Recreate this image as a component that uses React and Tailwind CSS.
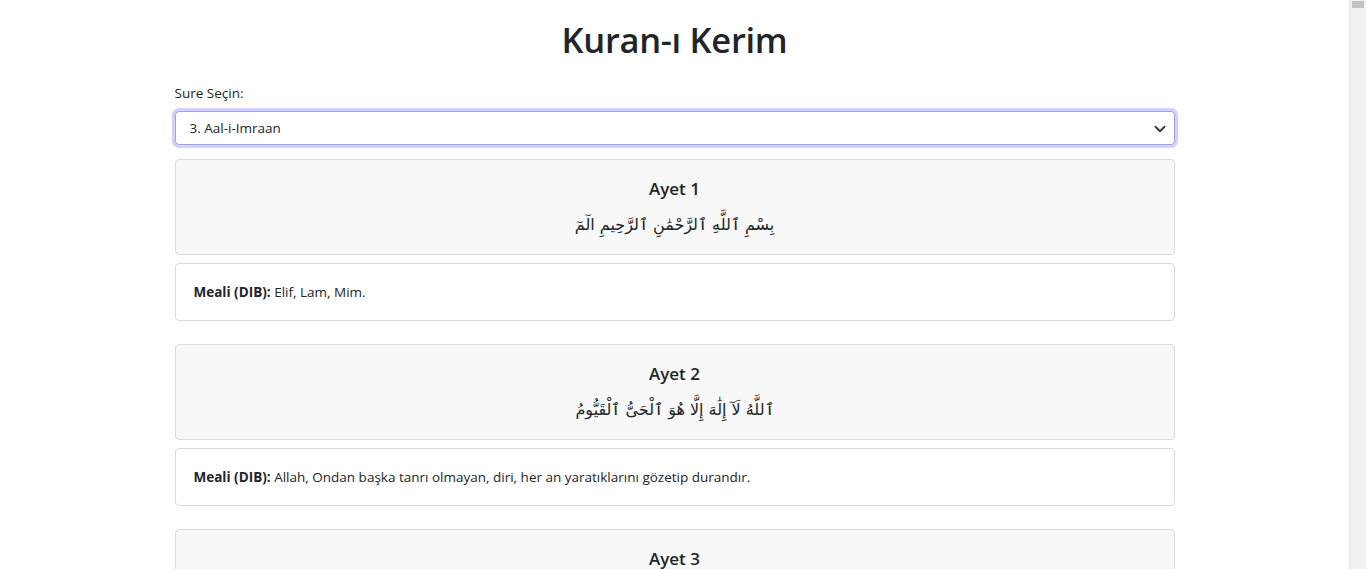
import React from "react";

const ayetler = [
  {
    no: 1,
    arabic: "بِسْمِ ٱللَّهِ ٱلرَّحْمَٰنِ ٱلرَّحِيمِ الٓمٓ",
    meal: "Elif, Lam, Mim.",
  },
  {
    no: 2,
    arabic: "ٱللَّهُ لَآ إِلَٰهَ إِلَّا هُوَ ٱلْحَىُّ ٱلْقَيُّومُ",
    meal: "Allah, Ondan başka tanrı olmayan, diri, her an yaratıklarını gözetip durandır.",
  },
  {
    no: 3,
    arabic: "نَزَّلَ عَلَيْكَ ٱلْكِتَٰبَ بِٱلْحَقِّ مُصَدِّقًا لِّمَا بَيْنَ يَدَيْهِ وَأَنزَلَ ٱلتَّوْرَىٰةَ وَٱلْإِنجِيلَ",
    meal: "O, sana Kitab'ı, kendinden öncekileri doğrulayıcı olarak hak ile indirdi. Tevrat'ı ve İncil'i de indirdi.",
  },
];

function Chevron() {
  return (
    <svg width="12" height="12" viewBox="0 0 16 16" className="text-[#343a40]">
      <path d="M2 5l6 6 6-6" fill="none" stroke="currentColor" strokeWidth="2.4" strokeLinecap="round" strokeLinejoin="round" />
    </svg>
  );
}

export default function App() {
  return (
    <div className="flex h-[569px] overflow-hidden bg-white text-[#212529] font-['Open_Sans','Liberation_Sans',sans-serif]">
      <main className="flex-1 overflow-hidden">
        <div className="w-[1000px] mx-auto pt-[16px] pb-10">
          <h1 className="text-center text-[34.5px] font-semibold leading-[48px] tracking-[-0.3px] mb-[19px]">Kuran-ı Kerim</h1>
          <label className="block text-[13.5px] leading-[20px] mb-[8px]">Sure Seçin:</label>
          <div className="relative h-[34px] rounded-[4px] border border-[#9aa2f8] shadow-[0_0_0_3px_#d6cffb] bg-white flex items-center px-[14px] text-[13.5px]">
            <span>3. Aal-i-Imraan</span>
            <span className="absolute right-[8px] top-[11px]"><Chevron /></span>
          </div>
          <div className="mt-[14px] flex flex-col">
            {ayetler.map((a) => (
              <div key={a.no} className="mb-[23px]">
                <div className="h-[96px] rounded-[4px] border border-[#dcdcdc] bg-[#f8f8f8] flex flex-col items-center pt-[17px]">
                  <div className="text-[17px] font-semibold leading-[24px]">Ayet {a.no}</div>
                  <div dir="rtl" className="mt-[9px] text-[16px] leading-[30px] font-['DejaVu_Sans',sans-serif]">{a.arabic}</div>
                </div>
                <div className="mt-[8px] h-[58px] rounded-[4px] border border-[#dcdcdc] bg-white flex items-center px-[18px] text-[13.5px]">
                  <span><b className="font-bold">Meali (DIB):</b> {a.meal}</span>
                </div>
              </div>
            ))}
          </div>
        </div>
      </main>
      {/* page scrollbar track */}
      <div className="w-[17px] shrink-0 bg-[#f1f1f1] border-l border-[#e8e8e8] pt-[1px] px-[2px]">
        <div className="h-[7px] bg-[#c1c1c1]" />
      </div>
    </div>
  );
}
